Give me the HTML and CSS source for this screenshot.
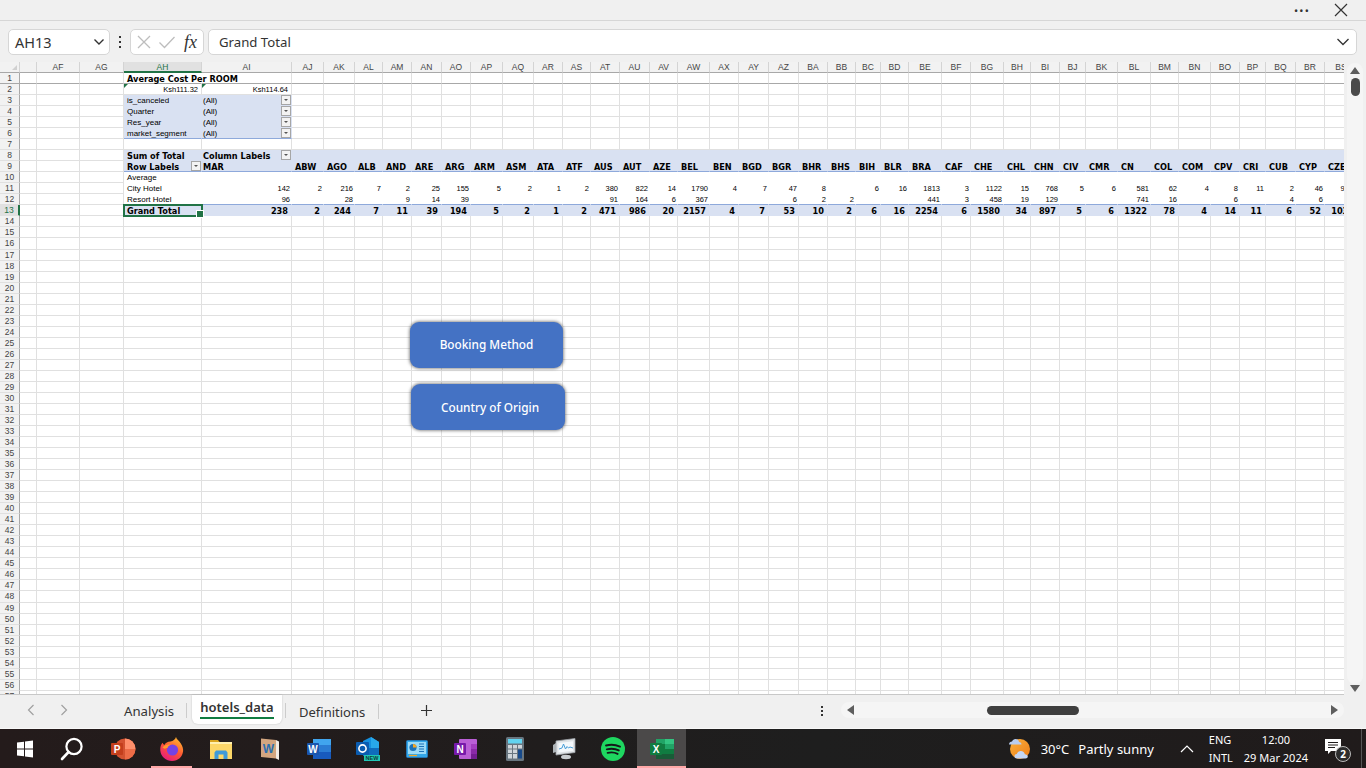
FILE: index.html
```html
<!DOCTYPE html>
<html lang="en">
<head>
    <meta charset="UTF-8">
    <title>hotels_data - Excel</title>
    <link rel="stylesheet" href="styles.css">
</head>
<body>
    <div class="title-bar">
        <span class="more-dots">&bull;&bull;&bull;</span>
        <svg class="close-icon" width="14" height="14" viewBox="0 0 14 14"><path d="M1 1l12 12M13 1L1 13" stroke="#333" stroke-width="1.2" fill="none"/></svg>
    </div>

    <div class="formula-bar">
        <div class="name-box">
            <span>AH13</span>
            <svg width="12" height="8" viewBox="0 0 12 8"><path d="M1.5 1.5L6 6l4.5-4.5" stroke="#333" stroke-width="1.4" fill="none"/></svg>
        </div>
        <div class="bar-dots"><i></i><i></i><i></i></div>
        <div class="fx-box">
            <svg width="16" height="16" viewBox="0 0 16 16"><path d="M2 2l12 12M14 2L2 14" stroke="#bdbdbd" stroke-width="1.3" fill="none"/></svg>
            <svg width="18" height="16" viewBox="0 0 18 16"><path d="M1.5 8.5l5 5L16.5 3" stroke="#bdbdbd" stroke-width="1.3" fill="none"/></svg>
            <span class="fx-label">fx</span>
        </div>
        <div class="formula-input">
            <span>Grand Total</span>
            <svg width="14" height="8" viewBox="0 0 14 8"><path d="M1.5 1L7 6.5 12.5 1" stroke="#333" stroke-width="1.3" fill="none"/></svg>
        </div>
    </div>

    <div class="sheet-area">
        <div class="sheet-wrap">
            <div class="sheet" id="sheet"></div>
            <div class="sheet-button button-booking">Booking Method</div>
            <div class="sheet-button button-country">Country of Origin</div>
        </div>
        <div class="v-scroll">
            <div class="v-track">
                <span class="tri tri-up"></span>
                <span class="v-thumb"></span>
            </div>
            <span class="tri tri-down"></span>
        </div>
    </div>

    <div class="tab-bar">
        <div class="tab-nav">
            <svg width="10" height="12" viewBox="0 0 10 12"><path d="M7.5 1L2.5 6l5 5" stroke="#a0a0a0" stroke-width="1.2" fill="none"/></svg>
            <svg width="10" height="12" viewBox="0 0 10 12"><path d="M2.5 1l5 5-5 5" stroke="#a0a0a0" stroke-width="1.2" fill="none"/></svg>
        </div>
        <div class="tabs">
            <div class="tab tab-first">Analysis</div>
            <div class="tab tab-active"><span>hotels_data</span></div>
            <div class="tab tab-last">Definitions</div>
        </div>
        <svg class="tab-add" width="13" height="13" viewBox="0 0 13 13"><path d="M6.5 1v11M1 6.5h11" stroke="#333" stroke-width="1.2"/></svg>
        <div class="tab-dots"><i></i><i></i><i></i></div>
        <div class="h-scroll">
            <span class="tri tri-left"></span>
            <span class="h-thumb"></span>
            <span class="tri tri-right"></span>
        </div>
    </div>

    <div class="taskbar">
        <div class="task-icons">
            <div class="task-icon">
                <svg width="18" height="18" viewBox="0 0 18 18"><path fill="#fff" d="M1 2.6l7-.9v6.8H1zM9 1.5l8-1v8H9zM1 9.5h7v6.8l-7-.9zM9 9.5h8v8l-8-1z"/></svg>
            </div>
            <div class="task-icon icon-search">
                <svg width="24" height="24" viewBox="0 0 24 24"><circle cx="14" cy="9.5" r="7.6" stroke="#fff" stroke-width="2.2" fill="none"/><path d="M8.6 15L2 22" stroke="#fff" stroke-width="2.6" stroke-linecap="round"/></svg>
            </div>
            <div class="task-icon">
                <svg width="26" height="24" viewBox="0 0 26 24"><circle cx="15" cy="12" r="10.5" fill="#d35230"/><path d="M15 1.5A10.500 10.500 0 0 1 25.500 12H15z" fill="#ff8f6b"/><path d="M15 12h10.500A10.500 10.500 0 0 1 15 22.500z" fill="#ed6c47"/><rect x="1" y="6" width="12" height="12" rx="1" fill="#c43e1c"/><text x="7" y="15.800" class="icon-letter" font-size="10">P</text></svg>
            </div>
            <div class="task-icon">
                <svg width="26" height="26" viewBox="0 0 26 26"><defs><linearGradient id="foxGrad" x1="0.800" y1="0" x2="0.200" y2="1"><stop offset="0" stop-color="#ffbd2e"/><stop offset="0.500" stop-color="#ff5634"/><stop offset="1" stop-color="#e31587"/></linearGradient></defs><path fill="url(#foxGrad)" d="M17 1c.6 2.600 3 3.500 4.800 6.500 1.800 2.800 2.500 5.500 2.300 7.500-.5 5.800-5 10-11 10C7 25 1.800 20.500 1.300 14.500 1 11 2 8.500 3.500 6.800c.4 1 1 1.700 1.800 2.200C6.500 6.800 8.800 5.500 11.500 5.500c2.500-.5 4.800-2 5.500-4.500z"/><circle cx="13.500" cy="14" r="5.600" fill="#7542e5"/><path fill="#ff9a2e" d="M3.500 11.500c2-2.600 5-3.500 8.300-2.800-1.800.7-3 1.800-3.300 3.300-.5-.2-1-.1-1.400.2-1.200.8-2.500.5-3.600-.7z"/></svg>
            </div>
            <div class="task-icon">
                <svg width="24" height="22" viewBox="0 0 24 22"><path d="M1 2h8l2 2.500H1z" fill="#d9a520"/><rect x="1" y="4" width="22" height="17" fill="#fcd768"/><rect x="1" y="4" width="22" height="2" fill="#fff0b0"/><path d="M5.500 21v-6.500l1.500-2h10l1.500 2V21h-4v-4.500h-5V21z" fill="#3f9ad8"/></svg>
            </div>
            <div class="task-icon">
                <svg width="20" height="24" viewBox="0 0 20 24"><path d="M1 1.500l15 1.500v18.500L1 20z" fill="#d3a680"/><path d="M16 3l3 1.500v18.500l-3-1.500z" fill="#f2ece4"/><text x="8.500" y="15.500" class="icon-letter icon-letter-blue" font-size="12">W</text></svg>
            </div>
            <div class="task-icon">
                <svg width="26" height="24" viewBox="0 0 26 24"><rect x="7" y="2" width="18" height="20" rx="1" fill="#2b7cd3"/><rect x="7" y="2" width="18" height="6" fill="#41a5ee"/><rect x="7" y="15" width="18" height="7" fill="#185abd"/><rect x="1" y="6" width="12" height="12" rx="1" fill="#1a56ae"/><text x="7" y="15.800" class="icon-letter" font-size="10">W</text></svg>
            </div>
            <div class="task-icon">
                <svg width="26" height="26" viewBox="0 0 26 26"><path d="M8 5l8-4 8 5v12H8z" fill="#1490df"/><path d="M16 1l8 5v6h-8z" fill="#28a8ea"/><path d="M8 12h16v8H8z" fill="#0f6cbd"/><rect x="1" y="6" width="13" height="13" rx="1" fill="#0a5cb0"/><circle cx="7.500" cy="12.500" r="3.600" fill="none" stroke="#fff" stroke-width="1.600"/><rect x="9" y="19" width="16" height="6" fill="#1fc7b6"/><text x="17" y="24" class="icon-letter icon-letter-dark" font-size="5.500">NEW</text></svg>
            </div>
            <div class="task-icon">
                <svg width="22" height="18" viewBox="0 0 22 18"><rect x="0.500" y="0.500" width="21" height="17" rx="1" fill="#34a7e8" stroke="#2477b5"/><rect x="2" y="2" width="18" height="12" fill="#9bdaf7"/><circle cx="7" cy="7.500" r="3.600" fill="#1c71b8"/><path d="M7 7.500V3.900A3.600 3.600 0 0 1 10.600 7.500z" fill="#f5a623"/><path d="M13 4h5M13 6.500h5M13 9h5M13 11.500h5" stroke="#1c71b8" stroke-width="1"/><path d="M3 15.500h8" stroke="#f5a623" stroke-width="1.200"/></svg>
            </div>
            <div class="task-icon">
                <svg width="25" height="22" viewBox="0 0 25 22"><rect x="6" y="1" width="18" height="20" rx="1" fill="#ba5fd6"/><rect x="18" y="6" width="6" height="5" fill="#a33ebf"/><rect x="18" y="11" width="6" height="5" fill="#8b2aa8"/><rect x="18" y="16" width="6" height="5" fill="#741e92"/><rect x="1" y="5" width="12" height="12" rx="1" fill="#7719aa"/><text x="7" y="14.800" class="icon-letter" font-size="10">N</text></svg>
            </div>
            <div class="task-icon">
                <svg width="18" height="24" viewBox="0 0 18 24"><rect width="18" height="24" rx="1.500" fill="#68757f"/><rect x="2" y="2" width="14" height="4.500" fill="#62d4f0"/><path d="M2 8h4v3.500H2zM7 8h4v3.500H7zM2 12.500h4V16H2zM7 12.500h4V16H7zM2 17h4v4.500H2zM7 17h4v4.500H7zM12 8h4v3.500h-4z" fill="#cfd5da"/><rect x="12" y="12.500" width="4" height="9" fill="#174a8b"/></svg>
            </div>
            <div class="task-icon">
                <svg width="24" height="22" viewBox="0 0 24 22"><path d="M4 3l19-2.500v14L4 17z" fill="#dfe3e6" stroke="#9aa0a5" stroke-width="0.800"/><path d="M6.500 5l14.500-1.800v9.600L6.500 14.500z" fill="#f4f8fb"/><path d="M7 11l3-1 1.500-4 2 5 1.500-2.500 1.500 1.500 1.500-1 3 1" stroke="#4a9fd8" stroke-width="1" fill="none"/><ellipse cx="14" cy="19" rx="5" ry="2.200" fill="#c9cdd0"/><path d="M1 7l3-2v9L1 15z" fill="#aeb4b8"/></svg>
            </div>
            <div class="task-icon">
                <svg width="24" height="24" viewBox="0 0 24 24"><circle cx="12" cy="12" r="12" fill="#1ed760"/><path d="M5 8.500c4.500-1.300 9.500-1 14 1.200M5.800 12.300c4-1 8.300-.8 12 1.100M6.600 15.900c3.400-.8 7-.6 10 1" stroke="#14181a" stroke-width="1.900" stroke-linecap="round" fill="none"/></svg>
            </div>
            <div class="task-icon task-current">
                <svg width="24" height="22" viewBox="0 0 24 22"><rect x="6" y="1" width="18" height="20" rx="1" fill="#107c41"/><rect x="15" y="1" width="9" height="5" fill="#33c481"/><rect x="6" y="1" width="9" height="5" fill="#21a366"/><rect x="15" y="6" width="9" height="5" fill="#21a366"/><rect x="15" y="16" width="9" height="5" fill="#185c37"/><rect x="6" y="16" width="9" height="5" fill="#185c37"/><rect x="0" y="5" width="12" height="12" rx="1" fill="#107c41"/><text x="6" y="14.800" class="icon-letter" font-size="10">X</text></svg>
            </div>
        </div>

        <div class="tray">
            <svg class="weather-icon" width="26" height="26" viewBox="0 0 26 26"><defs><linearGradient id="sunGrad" x1="0" y1="0" x2="1" y2="1"><stop offset="0" stop-color="#fbb03b"/><stop offset="1" stop-color="#ee7d1a"/></linearGradient></defs><circle cx="13" cy="13" r="10" fill="url(#sunGrad)"/><path d="M2 8.500c0-2 1.500-3 3-3 .6-1.500 2-2.500 3.500-2.500 2 0 3.500 1.500 3.500 3 1.500 0 2.500 1 2.500 2.500z" fill="#b9cdf0"/><path d="M10 22.500c-1.500 0-2.500-1-2.500-2.300 0-1.300 1-2.200 2.300-2.200.6-2 2.300-3 4-3 2.200 0 3.800 1.500 4 3.300 1.800 0 3 1 3 2.200 0 1.200-1 2-2.300 2z" fill="#c4d6f5"/></svg>
            <span class="tray-temp">30°C</span>
            <span class="tray-weather">Partly sunny</span>
            <svg class="tray-chevron" width="14" height="8" viewBox="0 0 14 8"><path d="M1 7l6-6 6 6" stroke="#fff" stroke-width="1.200" fill="none"/></svg>
            <div class="tray-lang"><span>ENG</span><span>INTL</span></div>
            <div class="tray-clock"><span>12:00</span><span>29 Mar 2024</span></div>
            <div class="tray-notify">
                <svg width="18" height="16" viewBox="0 0 18 16"><path d="M0 0h16v12H6l-3 3v-3H0z" fill="#fff"/><path d="M3 3.500h10M3 6h10M3 8.500h7" stroke="#201c1c" stroke-width="1"/></svg>
                <span class="notify-badge">2</span>
            </div>
        </div>
    </div>

    <script src="sheet.js"></script>
</body>
</html>
```

FILE: styles.css
```css
* {
    box-sizing: border-box;
}

html, body {
    margin: 0;
    height: 100%;
}

body {
    width: 1366px;
    height: 768px;
    overflow: hidden;
    display: flex;
    flex-direction: column;
    background-color: #f0f0f0;
    color: #222;
    font-family: "Noto Sans", "Open Sans", sans-serif;
}

/* top strip */
.title-bar {
    height: 21px;
    flex-shrink: 0;
    border-bottom: 1px solid #d6d6d6;
    display: flex;
    align-items: center;
    justify-content: flex-end;
    padding-right: 18px;
    gap: 24px;
}

.more-dots {
    font-size: 11px;
    letter-spacing: 1.2px;
    color: #333;
}

/* formula bar */
.formula-bar {
    height: 41px;
    flex-shrink: 0;
    display: flex;
    align-items: center;
    padding: 0 9px 0 8px;
}

.name-box {
    width: 102px;
    height: 26px;
    margin-top: 1px;
    background-color: white;
    border: 1px solid #d6d6d6;
    border-radius: 5px;
    display: flex;
    align-items: center;
    justify-content: space-between;
    padding: 0 4px 0 6px;
    font-size: 14.5px;
    color: #333;
}

.bar-dots {
    width: 20px;
    display: flex;
    flex-direction: column;
    align-items: center;
    gap: 3px;
}

.bar-dots i, .tab-dots i {
    width: 2px;
    height: 2px;
    background-color: #333;
}

.fx-box {
    width: 74px;
    height: 26px;
    margin-top: 1px;
    background-color: white;
    border: 1px solid #d6d6d6;
    border-radius: 5px;
    display: flex;
    align-items: center;
    gap: 6px;
    padding-left: 5px;
}

.fx-label {
    font-family: "Liberation Serif", serif;
    font-style: italic;
    font-size: 18px;
    color: #333;
    margin-left: 2px;
}

.formula-input {
    flex: 1;
    height: 26px;
    margin: 1px 0 0 4px;
    background-color: white;
    border: 1px solid #d6d6d6;
    border-radius: 5px;
    display: flex;
    align-items: center;
    justify-content: space-between;
    padding: 0 6px 0 10px;
    font-size: 13.2px;
    color: #333;
}

/* sheet */
.sheet-area {
    flex: 1;
    min-height: 0;
    display: flex;
}

.sheet-wrap {
    position: relative;
    width: 1344px;
    overflow: hidden;
    border-bottom: 1px solid #c8c8c8;
}

.sheet {
    display: grid;
    grid-template-rows: 11px repeat(57, 11.04px);
    background-color: white;
    font-family: "Liberation Sans", sans-serif;
    font-size: 8px;
    line-height: 10px;
    color: #000;
}

.cell {
    position: relative;
    border-right: 1px solid #e0e0e0;
    border-bottom: 1px solid #e0e0e0;
    padding: 1px 2px 0 3px;
    white-space: nowrap;
    background-color: white;
}

.col-head, .row-head {
    background-color: #f2f2f2;
    color: #444;
    font-size: 8.5px;
    text-align: center;
    border-right-color: #d4d4d4;
    border-bottom-color: #d4d4d4;
    padding: 0;
}

.col-head {
    border-bottom-color: #a8a8a8;
}

.row-head {
    border-right-color: #a8a8a8;
    border-bottom-color: #e0e0e0;
}

.corner::after {
    content: "";
    position: absolute;
    right: 2px;
    bottom: 2px;
    border-left: 5px solid transparent;
    border-bottom: 5px solid #d0d0d0;
}

.head-active {
    background-color: #e1e1e1;
    color: #217346;
}

.col-head.head-active {
    border-bottom: 2px solid #217346;
}

.row-head.head-active {
    border-right: 2px solid #217346;
}

.frozen {
    border-bottom-color: #a8a8a8;
}

.no-right {
    border-right-color: transparent;
    z-index: 1;
}

.plain {
    border-color: transparent;
}

.fill {
    background-color: #d9e1f2;
    border-color: transparent;
}

.rule {
    border-bottom-color: #8ea9db;
}

.tight {
    padding-left: 1px;
}

.num {
    text-align: right;
    font-size: 7.5px;
    padding-right: 1px;
}

.bold {
    font-family: "DejaVu Sans", sans-serif;
    font-weight: bold;
    font-size: 8.2px;
}

.wide-pad {
    padding-right: 3px;
}

.last-col {
    padding-right: 4px;
}

.tick::before {
    content: "";
    position: absolute;
    left: 0;
    top: 0;
    border-top: 4px solid #217346;
    border-right: 4px solid transparent;
}

.filter-btn {
    position: absolute;
    right: 0;
    top: 0;
    width: 10px;
    height: 10px;
    background-color: #f3f3f3;
    border: 1px solid #a6a6a6;
}

.filter-btn::after {
    content: "";
    position: absolute;
    left: 2px;
    top: 3px;
    border-left: 2px solid transparent;
    border-right: 2px solid transparent;
    border-top: 2px solid #555;
}

.selected {
    outline: 2px solid #217346;
    outline-offset: -1px;
    z-index: 2;
}

.selected::after {
    content: "";
    position: absolute;
    right: -3px;
    bottom: -3px;
    width: 6px;
    height: 6px;
    background-color: #217346;
    border: 1px solid white;
}

.sheet-button {
    position: absolute;
    height: 46px;
    background-color: #4472c4;
    border-radius: 9px;
    box-shadow: 0 0 3px 1px rgba(60, 60, 60, 0.55);
    color: white;
    font-size: 11.8px;
    font-weight: 500;
    display: flex;
    align-items: center;
    justify-content: center;
    padding-bottom: 2px;
}

.button-booking {
    left: 410px;
    top: 260px;
    width: 153px;
}

.button-country {
    left: 411px;
    top: 322px;
    width: 154px;
    padding-left: 4px;
    padding-bottom: 1px;
}

/* scrollbars */
.v-scroll {
    flex: 1;
    display: flex;
    flex-direction: column;
    align-items: center;
    padding: 0 0 3px 0;
}

.v-track {
    flex: 1;
    width: 16px;
    margin-top: 1px;
    padding-top: 4px;
    background-color: #f5f5f5;
    border-radius: 8px;
    display: flex;
    flex-direction: column;
    align-items: center;
    gap: 4px;
}

.v-thumb {
    width: 9px;
    height: 18px;
    border-radius: 5px;
    background-color: #4a4a4a;
}

.tri {
    width: 0;
    height: 0;
    flex-shrink: 0;
}

.tri-up {
    border-left: 5px solid transparent;
    border-right: 5px solid transparent;
    border-bottom: 7px solid #5e5e5e;
}

.tri-down {
    margin-top: 1px;
    border-left: 5px solid transparent;
    border-right: 5px solid transparent;
    border-top: 7px solid #5e5e5e;
}

.tri-left {
    border-top: 5px solid transparent;
    border-bottom: 5px solid transparent;
    border-right: 7px solid #5e5e5e;
}

.tri-right {
    border-top: 5px solid transparent;
    border-bottom: 5px solid transparent;
    border-left: 7px solid #5e5e5e;
}

/* sheet tabs */
.tab-bar {
    height: 33px;
    flex-shrink: 0;
    display: flex;
    align-items: flex-start;
    font-size: 13.2px;
    color: #333;
}

.tab-nav {
    width: 116px;
    height: 29px;
    display: flex;
    align-items: center;
    gap: 23px;
    padding-left: 26px;
}

.tabs {
    display: flex;
}

.tab {
    height: 29px;
    display: flex;
    align-items: center;
    padding: 3px 8px 0;
    position: relative;
}

.tab-first {
    width: 66px;
}

.tab-first::after {
    content: "";
    position: absolute;
    right: -5px;
    top: 8px;
    height: 15px;
    border-right: 1px solid #ccc;
}

.tab-active {
    width: 90px;
    margin-left: 10px;
    padding: 0 0 3px;
    justify-content: center;
    background-color: white;
    border-radius: 0 0 6px 6px;
    box-shadow: 0 0 2px rgba(0, 0, 0, 0.2);
    font-size: 13px;
    font-weight: 600;
}

.tab-active::after {
    content: "";
    position: absolute;
    right: -4px;
    top: 8px;
    height: 15px;
    border-right: 1px solid #ccc;
}

.tab-active span {
    display: block;
    padding-bottom: 1px;
    border-bottom: 2px solid #107c41;
}

.tab-last {
    margin-left: 9px;
    border-right: 1px solid #ccc;
    height: 15px;
    margin-top: 9px;
    padding: 0 13px 0 8px;
    font-size: 13px;
}

.tab-add {
    margin: 9px 0 0 41px;
}

.tab-dots {
    margin: 11px 0 0 388px;
    display: flex;
    flex-direction: column;
    gap: 2px;
}

.h-scroll {
    width: 503px;
    height: 16px;
    margin: 7px 0 0 18px;
    padding: 0 6px;
    background-color: #f5f5f5;
    border-radius: 8px;
    display: flex;
    align-items: center;
    position: relative;
}

.h-thumb {
    width: 92px;
    height: 9px;
    margin-left: 133px;
    margin-right: auto;
    border-radius: 5px;
    background-color: #3f3f3f;
}

/* windows taskbar */
.taskbar {
    height: 40px;
    flex-shrink: 0;
    background: linear-gradient(90deg, #241b1b, #1e1e1e 60%, #201b1b);
    color: white;
    display: flex;
    justify-content: space-between;
    border-top: 1px solid #f8f8f8;
}

.task-icons {
    display: flex;
}

.task-icon {
    width: 49px;
    display: flex;
    align-items: center;
    justify-content: center;
    position: relative;
}

.icon-search {
    padding-right: 4px;
}

.task-icon:nth-child(4)::after, .task-current::after {
    content: "";
    position: absolute;
    left: 4px;
    right: 4px;
    bottom: 0;
    height: 2px;
    background-color: #ffa7a7;
}

.task-current {
    background-color: #4b4949;
}

.task-current::after {
    left: 0;
    right: 0;
}

.icon-letter {
    font-family: "Liberation Sans", sans-serif;
    font-weight: bold;
    fill: white;
    text-anchor: middle;
}

.icon-letter-blue {
    fill: #2a6fb0;
}

.icon-letter-dark {
    fill: #0b3b36;
}

.tray {
    display: flex;
    align-items: center;
    font-size: 13px;
    padding-right: 11px;
    border-right: 1px solid #555;
    margin-right: 4px;
}

.tray-temp {
    margin-left: 8px;
}

.tray-weather {
    margin-left: 9px;
}

.tray-chevron {
    margin-left: 26px;
}

.tray-lang {
    margin-left: 15px;
    display: flex;
    flex-direction: column;
    font-size: 11px;
    line-height: 18px;
}

.tray-clock {
    margin-left: 11px;
    display: flex;
    flex-direction: column;
    align-items: center;
    font-size: 11px;
    line-height: 18px;
}

.tray-notify {
    margin-left: 17px;
    position: relative;
    width: 25px;
    height: 26px;
    padding-top: 3px;
}

.notify-badge {
    position: absolute;
    right: -1px;
    bottom: 0;
    width: 16px;
    height: 16px;
    border-radius: 50%;
    background-color: #2c2c2c;
    border: 1px solid #bbb;
    font-size: 10px;
    font-weight: bold;
    line-height: 14px;
    text-align: center;
}
```

FILE: sheet.js
```js
const COLUMNS = 'AE AF AG AH AI AJ AK AL AM AN AO AP AQ AR AS AT AU AV AW AX AY AZ BA BB BC BD BE BF BG BH BI BJ BK BL BM BN BO BP BQ BR BS'.split(' ');
const WIDTHS = [17, 43, 44, 78, 90, 32, 31, 28, 29, 30, 29, 32, 31, 29, 28, 29, 30, 28, 32, 29, 30, 30, 29, 28, 25, 28, 33, 29, 33, 27, 29, 26, 32, 33, 28, 32, 29, 26, 30, 29, 33];

const CODES = 'ABW AGO ALB AND ARE ARG ARM ASM ATA ATF AUS AUT AZE BEL BEN BGD BGR BHR BHS BIH BLR BRA CAF CHE CHL CHN CIV CMR CN COL COM CPV CRI CUB CYP CZE'.split(' ');
const CITY = [142, 2, 216, 7, 2, 25, 155, 5, 2, 1, 2, 380, 822, 14, 1790, 4, 7, 47, 8, '', 6, 16, 1813, 3, 1122, 15, 768, 5, 6, 581, 62, 4, 8, 11, 2, 46, 971];
const RESORT = [96, '', 28, '', 9, 14, 39, '', '', '', '', 91, 164, 6, 367, '', '', 6, 2, 2, '', '', 441, 3, 458, 19, 129, '', '', 741, 16, '', 6, '', 4, 6, 67];
const TOTAL = [238, 2, 244, 7, 11, 39, 194, 5, 2, 1, 2, 471, 986, 20, 2157, 4, 7, 53, 10, 2, 6, 16, 2254, 6, 1580, 34, 897, 5, 6, 1322, 78, 4, 14, 11, 6, 52, 1038];

const FILTERS = { 3: 'is_canceled', 4: 'Quarter', 5: 'Res_year', 6: 'market_segment' };
const AH = 3;
const AI = 4;
const BS = COLUMNS.length - 1;

const sheet = document.getElementById('sheet');
sheet.style.gridTemplateColumns = '20px ' + WIDTHS.map((w) => w + 'px').join(' ');

function addCell(text, classes, filter) {
    const cell = document.createElement('div');
    cell.className = 'cell ' + classes;
    cell.textContent = text;
    if (filter) {
        const button = document.createElement('span');
        button.className = 'filter-btn';
        cell.appendChild(button);
    }
    sheet.appendChild(cell);
}

function dataCell(row, col) {
    if (col < AH) return row === 1 ? ['', 'frozen'] : ['', ''];

    const isLabel = col === AH;
    const value = col - AI;

    if (row === 1) {
        return isLabel ? ['Average Cost Per ROOM', 'bold frozen no-right'] : ['', 'frozen'];
    }
    if (row === 2 && col <= AI) {
        return [isLabel ? 'Ksh111.32' : 'Ksh114.64', 'num tick wide-pad'];
    }
    if (FILTERS[row] && col <= AI) {
        const rule = row === 6 ? ' rule' : '';
        return [isLabel ? FILTERS[row] : '(All)', 'fill' + rule + (isLabel ? '' : ' tight')];
    }
    if (row === 8) {
        return [isLabel ? 'Sum of Total' : col === AI ? 'Column Labels' : '', 'fill bold' + (col === AI ? ' tight' : '')];
    }
    if (row === 9) {
        const text = isLabel ? 'Row Labels' : col === AI ? 'MAR' : CODES[value - 1];
        return [text, 'fill bold rule' + (col === AI ? ' tight' : '')];
    }
    if (row === 10) {
        return [isLabel ? 'Average' : '', 'plain'];
    }
    if (row === 11) {
        if (isLabel) return ['City Hotel', 'plain'];
        return [CITY[value], 'plain num' + (col === BS ? ' last-col' : '')];
    }
    if (row === 12) {
        return isLabel ? ['Resort Hotel', 'plain rule'] : [RESORT[value], 'plain rule num'];
    }
    if (row === 13) {
        return isLabel ? ['Grand Total', 'fill bold selected'] : [TOTAL[value], 'fill bold num wide-pad'];
    }
    return ['', ''];
}

// header row
addCell('', 'col-head corner');
COLUMNS.forEach((name, col) => {
    addCell(col === 0 ? '' : name, 'col-head' + (col === AH ? ' head-active' : ''));
});

// body rows
for (let row = 1; row <= 57; row++) {
    addCell(row, 'row-head' + (row === 13 ? ' head-active' : '') + (row === 1 ? ' frozen' : ''));
    COLUMNS.forEach((name, col) => {
        const [text, classes] = dataCell(row, col);
        const hasFilter = (col === AI && (FILTERS[row] || row === 8)) || (col === AH && row === 9);
        addCell(text, classes, hasFilter);
    });
}
```
